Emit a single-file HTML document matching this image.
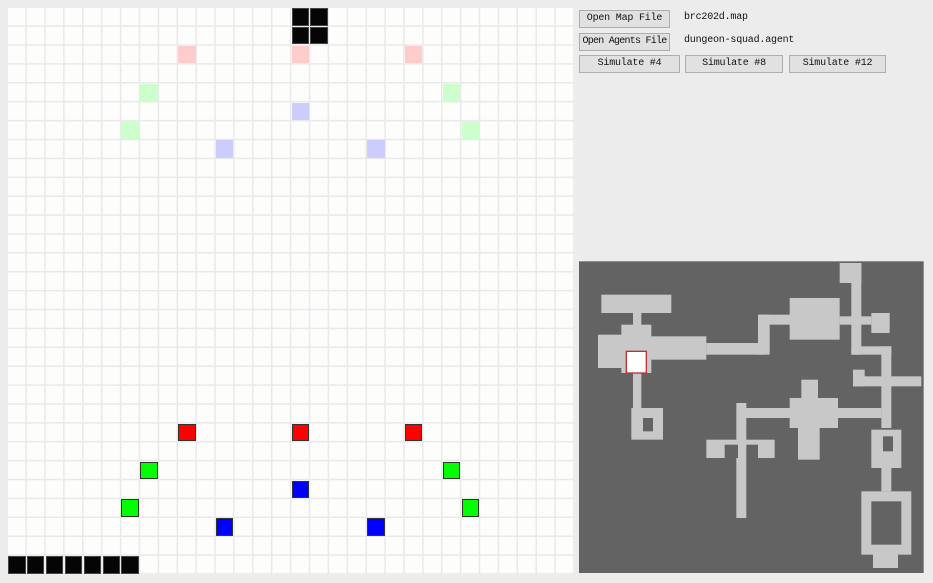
<!DOCTYPE html>
<html><head><meta charset="utf-8"><style>
body{margin:0;width:933px;height:583px;background:#ececec;position:relative;overflow:hidden;font-family:"Liberation Mono","Noto Sans CJK SC",monospace;}
#grid{position:absolute;left:8px;top:8px;width:567px;height:567px;background-color:#fdfdfc;
background-image:linear-gradient(to right,transparent 17.2px,#e9e9e9 17.2px),linear-gradient(to bottom,transparent 17.2px,#e9e9e9 17.2px);
background-size:18.9px 18.9px;}
.c{position:absolute;width:17.6px;height:17.6px;box-sizing:border-box;}
.k{background:#050505;border:1px solid #444}
.R{background:#ff0000;border:1.5px solid #333}
.G{background:#00ff00;border:1.5px solid #333}
.B{background:#0000ff;border:1.5px solid #333}
.r{background:#ffcccc}.g{background:#ccffcc}.b{background:#ccccff}
.btn{position:absolute;height:16px;background:#e1e1e1;border:1px solid #adadad;font-size:10px;line-height:16px;text-align:center;color:#111;box-sizing:content-box;white-space:nowrap;overflow:hidden;letter-spacing:-0.2px}
.lbl{position:absolute;font-size:10px;color:#111;white-space:nowrap;letter-spacing:-0.2px}
</style></head><body>
<div id="grid"></div>
<div id="cells"></div>
<div class="btn" style="left:579px;top:10px;width:89px">Open Map File</div>
<div class="lbl" style="left:684px;top:12px">brc202d.map</div>
<div class="btn" style="left:579px;top:33px;width:89px;letter-spacing:-0.75px">Open Agents File</div>
<div class="lbl" style="left:684px;top:35px">dungeon-squad.agent</div>
<div class="btn" style="left:579px;top:55px;width:99px">Simulate #4</div>
<div class="btn" style="left:685px;top:55px;width:96px">Simulate #8</div>
<div class="btn" style="left:789px;top:55px;width:95px">Simulate #12</div>
<svg style="position:absolute;left:578px;top:258px" width="350" height="320" viewBox="0 0 1050 960">
<rect x="3" y="10" width="1034" height="935" fill="#636363"/>
<g fill="#c8c8c8">
<rect x="70" y="110" width="210" height="55"/>
<rect x="165" y="160" width="25" height="45"/>
<rect x="130" y="200" width="90" height="145"/>
<rect x="60" y="230" width="75" height="100"/>
<rect x="215" y="235" width="170" height="70"/>
<rect x="385" y="255" width="175" height="35"/>
<rect x="540" y="170" width="35" height="120"/>
<rect x="545" y="170" width="95" height="30"/>
<rect x="635" y="120" width="150" height="125"/>
<rect x="785" y="175" width="95" height="25"/>
<rect x="880" y="165" width="55" height="60"/>
<rect x="820" y="15" width="30" height="275"/>
<rect x="785" y="15" width="65" height="60"/>
<rect x="820" y="265" width="120" height="25"/>
<rect x="910" y="265" width="30" height="245"/>
<rect x="825" y="355" width="205" height="30"/>
<rect x="825" y="335" width="35" height="50"/>
<rect x="880" y="515" width="90" height="115"/>
<rect x="910" y="630" width="30" height="70"/>
<rect x="850" y="700" width="150" height="190"/>
<rect x="885" y="880" width="75" height="50"/>
<rect x="635" y="420" width="145" height="90"/>
<rect x="670" y="365" width="50" height="55"/>
<rect x="485" y="450" width="425" height="30"/>
<rect x="660" y="510" width="65" height="95"/>
<rect x="475" y="435" width="30" height="345"/>
<rect x="385" y="545" width="205" height="55"/>
<rect x="165" y="345" width="25" height="105"/>
<rect x="160" y="450" width="95" height="95"/>
</g>
<g fill="#636363">
<rect x="880" y="730" width="90" height="130"/>
<rect x="915" y="535" width="30" height="45"/>
<rect x="440" y="560" width="40" height="40"/><rect x="505" y="560" width="35" height="40"/>
<rect x="195" y="480" width="30" height="40"/>
</g>
<rect x="145" y="280" width="60" height="65" fill="#fff" stroke="#c03030" stroke-width="4"/>
</svg>
<script>
var P=18.9,o=8,h='';
function a(col,row,cl){h+='<div class="c '+cl+'" style="left:'+(o+col*P)+'px;top:'+(o+row*P)+'px"></div>';}
a(15,0,'k');a(16,0,'k');a(15,1,'k');a(16,1,'k');
for(var i=0;i<7;i++)a(i,29,'k');
a(9,2,'r');a(15,2,'r');a(21,2,'r');
a(7,4,'g');a(23,4,'g');a(6,6,'g');a(24,6,'g');
a(15,5,'b');a(11,7,'b');a(19,7,'b');
a(9,22,'R');a(15,22,'R');a(21,22,'R');
a(7,24,'G');a(23,24,'G');a(6,26,'G');a(24,26,'G');
a(15,25,'B');a(11,27,'B');a(19,27,'B');
document.getElementById('cells').innerHTML=h;
</script>
</body></html>
